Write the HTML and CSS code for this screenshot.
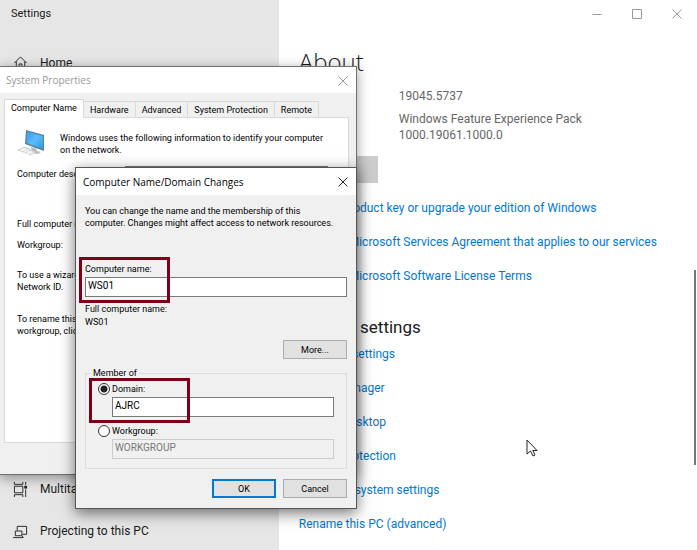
FILE: index.html
```html
<!DOCTYPE html>
<html lang="en">
<head>
<meta charset="utf-8">
<title>Settings</title>
<link rel="stylesheet" href="styles.css">
</head>
<body>
<div class="desktop">
  <div class="settings">
    <aside class="sidebar">
      <div class="app-title">Settings</div>
      <nav class="nav">
        <a class="nav-item" href="#home">
          <svg class="nav-icon" viewBox="0 0 16 16"><path d="M1.500 7.500 8 1l6.500 6.500M3.500 6v9h3V8.500h3V15h3V6"/></svg>
          Home</a>
        <a class="nav-item nav-lower" href="#multitasking">
          <svg class="nav-icon" viewBox="0 0 16 16"><path d="M1.500 4.500h9v7h-9zM1.500 0v2.500h9V0M1.500 16v-2.500h9V16M13.500 0v3M13.500 8v8"/><path class="solid" d="M12 4h3v3h-3z"/></svg>
          Multitasking</a>
        <a class="nav-item" href="#projecting">
          <svg class="nav-icon" viewBox="0 0 16 16"><path d="M4.500 7V2.500h10V11H10M2.500 7.500h7v5h-7zM0 14.500h11M9.500 12.500l1.500 2"/></svg>
          Projecting to this PC</a>
      </nav>
    </aside>
    <main class="about">
      <div class="window-buttons">
        <button type="button" aria-label="Minimize"><svg viewBox="0 0 10 10"><path d="M.5 5.500h9"/></svg></button>
        <button type="button" aria-label="Maximize"><svg viewBox="0 0 10 10"><path d="M.5.5h9v9h-9z"/></svg></button>
        <button type="button" aria-label="Close"><svg viewBox="0 0 10 10"><path d="m.5.5 9 9m0-9-9 9"/></svg></button>
      </div>
      <h1>About</h1>
      <div class="specs">
        <p>19045.5737</p>
        <p>Windows Feature Experience Pack<br>1000.19061.1000.0</p>
      </div>
      <button type="button" class="copy" aria-label="Copy"></button>
      <div class="links">
        <a href="#key">Change product key or upgrade your edition of Windows</a>
        <a href="#services">Read the Microsoft Services Agreement that applies to our services</a>
        <a href="#license">Read the Microsoft Software License Terms</a>
      </div>
      <h2>Related settings</h2>
      <div class="links">
        <a href="#bitlocker">BitLocker settings</a>
        <a href="#devices">Device Manager</a>
        <a href="#remote">Remote desktop</a>
        <a href="#protection">System protection</a>
        <a href="#advanced">Advanced system settings</a>
        <a href="#rename">Rename this PC (advanced)</a>
      </div>
      <div class="scrollbar"></div>
    </main>
  </div>

  <section class="window properties">
    <header class="titlebar inactive">
      <span>System Properties</span>
      <button type="button" aria-label="Close"><svg viewBox="0 0 10 10"><path d="m.5.5 9 9m0-9-9 9"/></svg></button>
    </header>
    <div class="tabs">
      <button type="button" class="tab selected">Computer Name</button>
      <button type="button" class="tab">Hardware</button>
      <button type="button" class="tab">Advanced</button>
      <button type="button" class="tab">System Protection</button>
      <button type="button" class="tab">Remote</button>
      <span class="tab-line"></span>
    </div>
    <div class="panel">
      <div class="intro">
        <svg class="pc" viewBox="0 0 28 26">
          <defs><linearGradient id="screen" x1="0" y1="0" x2="1" y2="1"><stop offset="0" stop-color="#2d9df0"/><stop offset=".5" stop-color="#5cbcfb"/><stop offset="1" stop-color="#2497ec"/></linearGradient></defs>
          <path fill="#b7bec4" d="m14 17 5 1 1 3 4 1-3 2-6-1z"/>
          <path fill="#d7dadd" stroke="#aeb4b8" stroke-width=".5" d="m8 17 11 5-5 3L1 20z"/>
          <path stroke="#fff" stroke-width=".7" fill="none" d="m5 18.500 12 5M3 19.300l12 5M9 18l-5 3M12 19.500l-5 3M15 21l-5 3"/>
          <path fill="#607d93" d="m9 0 18 5v16L8 14z"/>
          <path fill="url(#screen)" d="m10 1.500 16 4.500v13L9.500 13z"/>
        </svg>
        <p>Windows uses the following information to identify your computer<br>on the network.</p>
      </div>
      <div class="description">
        <label for="description">Computer description:</label>
        <input id="description" type="text">
      </div>
      <p class="full-name">Full computer name:</p>
      <p class="workgroup">Workgroup:</p>
      <p class="wizard">To use a wizard to join a domain, click<br>Network ID.</p>
      <p>To rename this computer or change its<br>workgroup, click Change.</p>
    </div>
  </section>

  <form class="window changes">
    <header class="titlebar">
      <span>Computer Name/Domain Changes</span>
      <button type="button" aria-label="Close"><svg viewBox="0 0 10 10"><path d="m.5.5 9 9m0-9-9 9"/></svg></button>
    </header>
    <div class="form-body">
      <p class="explain">You can change the name and the membership of this<br>computer. Changes might affect access to network resources.</p>
      <label for="name">Computer name:</label>
      <input id="name" type="text" value="WS01">
      <p class="result">Full computer name:<br>WS01</p>
      <div class="actions"><button type="button">More...</button></div>
      <fieldset>
        <legend>Member of</legend>
        <label class="choice"><input type="radio" name="member" checked>Domain:</label>
        <input type="text" value="AJRC" aria-label="Domain">
        <label class="choice second"><input type="radio" name="member">Workgroup:</label>
        <input type="text" value="WORKGROUP" aria-label="Workgroup" disabled>
      </fieldset>
      <div class="actions"><button type="button" class="default">OK</button><button type="button">Cancel</button></div>
    </div>
    <div class="mark mark-name"></div>
    <div class="mark mark-domain"></div>
  </form>

  <svg class="cursor" viewBox="0 0 12 18"><path d="M1 1v14l3.500-3 2.500 5 2-1-2.200-4.500H11z"/></svg>
</div>
</body>
</html>
```
FILE: styles.css
```css
* { box-sizing: border-box; }
body, p, h1, h2 { margin: 0; }
body { font: 12px/16px Roboto, sans-serif; color: #1a1a1a; background: #fff; }
button, input { font: inherit; color: inherit; }
a { text-decoration: none; }

.desktop { position: relative; min-height: 100vh; overflow: hidden; }
.settings { display: grid; grid-template-columns: 2fr 3fr; min-height: 100vh; }

.sidebar { display: flex; flex-direction: column; background: #e6e6e6; }
.app-title { padding: 6px 11px; font-size: 11px; }
.nav { flex: 1; display: flex; flex-direction: column; gap: 4px; padding-top: 16px; }
.nav-item { display: flex; align-items: center; gap: 12px; height: 38px; padding-left: 13px; color: inherit; }
.nav-lower { margin-top: auto; }
.nav-icon { width: 15px; height: 15px; fill: none; stroke: #222; }
.nav-icon .solid { fill: #222; stroke: none; }

.about { position: relative; padding-left: 20px; }
.window-buttons { display: flex; justify-content: flex-end; }
.window-buttons button { width: 40px; height: 26px; padding: 0; border: 0; background: none; }
.window-buttons svg, .titlebar svg { width: 10px; height: 10px; fill: none; stroke: #999; vertical-align: middle; }
h1 { margin-top: 20px; font: 300 24px/32px "Open Sans", sans-serif; }
.specs { padding: 10px 0 0 100px; color: #666; }
.specs p + p { margin-top: 7px; }
.copy { display: block; width: 79px; height: 27px; margin-top: 13px; border: 0; background: #ccc; }
.links { display: grid; gap: 18px; justify-items: start; }
.links a { color: #0078d4; }
.copy + .links { margin-top: 17px; }
h2 { margin: 31px 0 7px; font-size: 17px; line-height: 24px; font-weight: 400; }
.scrollbar { position: absolute; top: 270px; right: 1px; width: 2px; height: 195px; background: #777; }

.window { position: absolute; background: #f0f0f0; border: 1px solid #707070; box-shadow: 0 3px 12px rgba(0, 0, 0, .4); font: 9px/12px Roboto, sans-serif; color: #000; white-space: nowrap; }
.titlebar { display: flex; justify-content: space-between; align-items: center; height: 27px; padding: 0 8px 0 7px; background: #fff; font: 10px/16px "Open Sans", sans-serif; }
.titlebar button { padding: 0; border: 0; background: none; line-height: 10px; }
.titlebar svg { stroke: #222; }
.titlebar.inactive { height: 26px; color: #999; }
.inactive svg { stroke: #999; }

.properties { left: -1px; top: 66px; width: 358px; height: 409px; }
.properties .titlebar { padding-left: 6px; }
.tabs { display: flex; align-items: flex-end; height: 25px; padding: 0 7px 0 4px; }
.tab { height: 17px; padding: 0 6px; border: 1px solid #d9d9d9; border-left-width: 0; background: #f0f0f0; }
.tab.selected { height: 19px; padding: 0 6px 2px; border-left-width: 1px; border-bottom: 0; background: #fff; }
.tab-line { flex: 1; border-bottom: 1px solid #d9d9d9; }
.panel { height: 325px; margin: 0 7px 0 4px; padding: 12px; border: 1px solid #d9d9d9; border-top-width: 0; background: #fff; }
.intro { display: flex; gap: 15px; }
.pc { width: 28px; height: 26px; }
.intro p { padding-top: 2px; }
.description { display: flex; gap: 12px; padding: 10px 8px 0 0; }
.description label { padding-top: 2px; width: 96px; }
.description input { flex: 1; min-width: 0; height: 20px; border: 1px solid #7a7a7a; background: #fff; }
.full-name { margin-top: 32px; }
.workgroup { margin-top: 9px; }
.wizard { margin: 18px 0 20px; }

.changes { left: 75px; top: 167px; width: 282px; border-color: #555; box-shadow: 0 4px 14px rgba(0, 0, 0, .55); }
.form-body { padding: 10px 9px; }
.explain { margin-bottom: 34px; }
.form-body > label { display: block; margin-bottom: 2px; }
.form-body input[type="text"] { display: block; width: 100%; height: 20px; padding: 0 2px 3px; border: 1px solid #7a7a7a; background: #fff; font-size: 10px; }
.result { margin: 6px 0 11px; line-height: 13px; }
.actions { display: flex; justify-content: flex-end; gap: 7px; }
.actions button { width: 64px; height: 19px; padding: 0; border: 1px solid #adadad; background: #e1e1e1; }
.actions .default { border: 2px solid #0078d7; }
fieldset { min-width: 0; margin: 8px 0 10px; padding: 3px 12px 9px; border: 1px solid #dcdcdc; }
legend { margin-left: -7px; padding: 0 2px; }
.choice { display: flex; align-items: center; gap: 2px; height: 14px; margin-bottom: 1px; }
.choice input { appearance: none; width: 12px; height: 12px; margin: 0; border: 1px solid #333; border-radius: 50%; background: #fff; }
.choice input:checked { background: radial-gradient(circle, #222 3px, #fff 4px); }
.choice.second { margin-top: 7px; }
.form-body fieldset input[type="text"] { width: auto; min-width: 222px; margin-left: 14px; }
.form-body input:disabled { border-color: #ccc; background: #f0f0f0; color: #777; }

.mark { position: absolute; border: 3px solid #7d0019; pointer-events: none; }
.mark-name { left: 3px; top: 89px; width: 91px; height: 46px; }
.mark-domain { left: 13px; top: 210px; width: 101px; height: 45px; }
.cursor { position: absolute; left: 526px; top: 439px; width: 12px; height: 18px; fill: #fff; stroke: #222; }
```
